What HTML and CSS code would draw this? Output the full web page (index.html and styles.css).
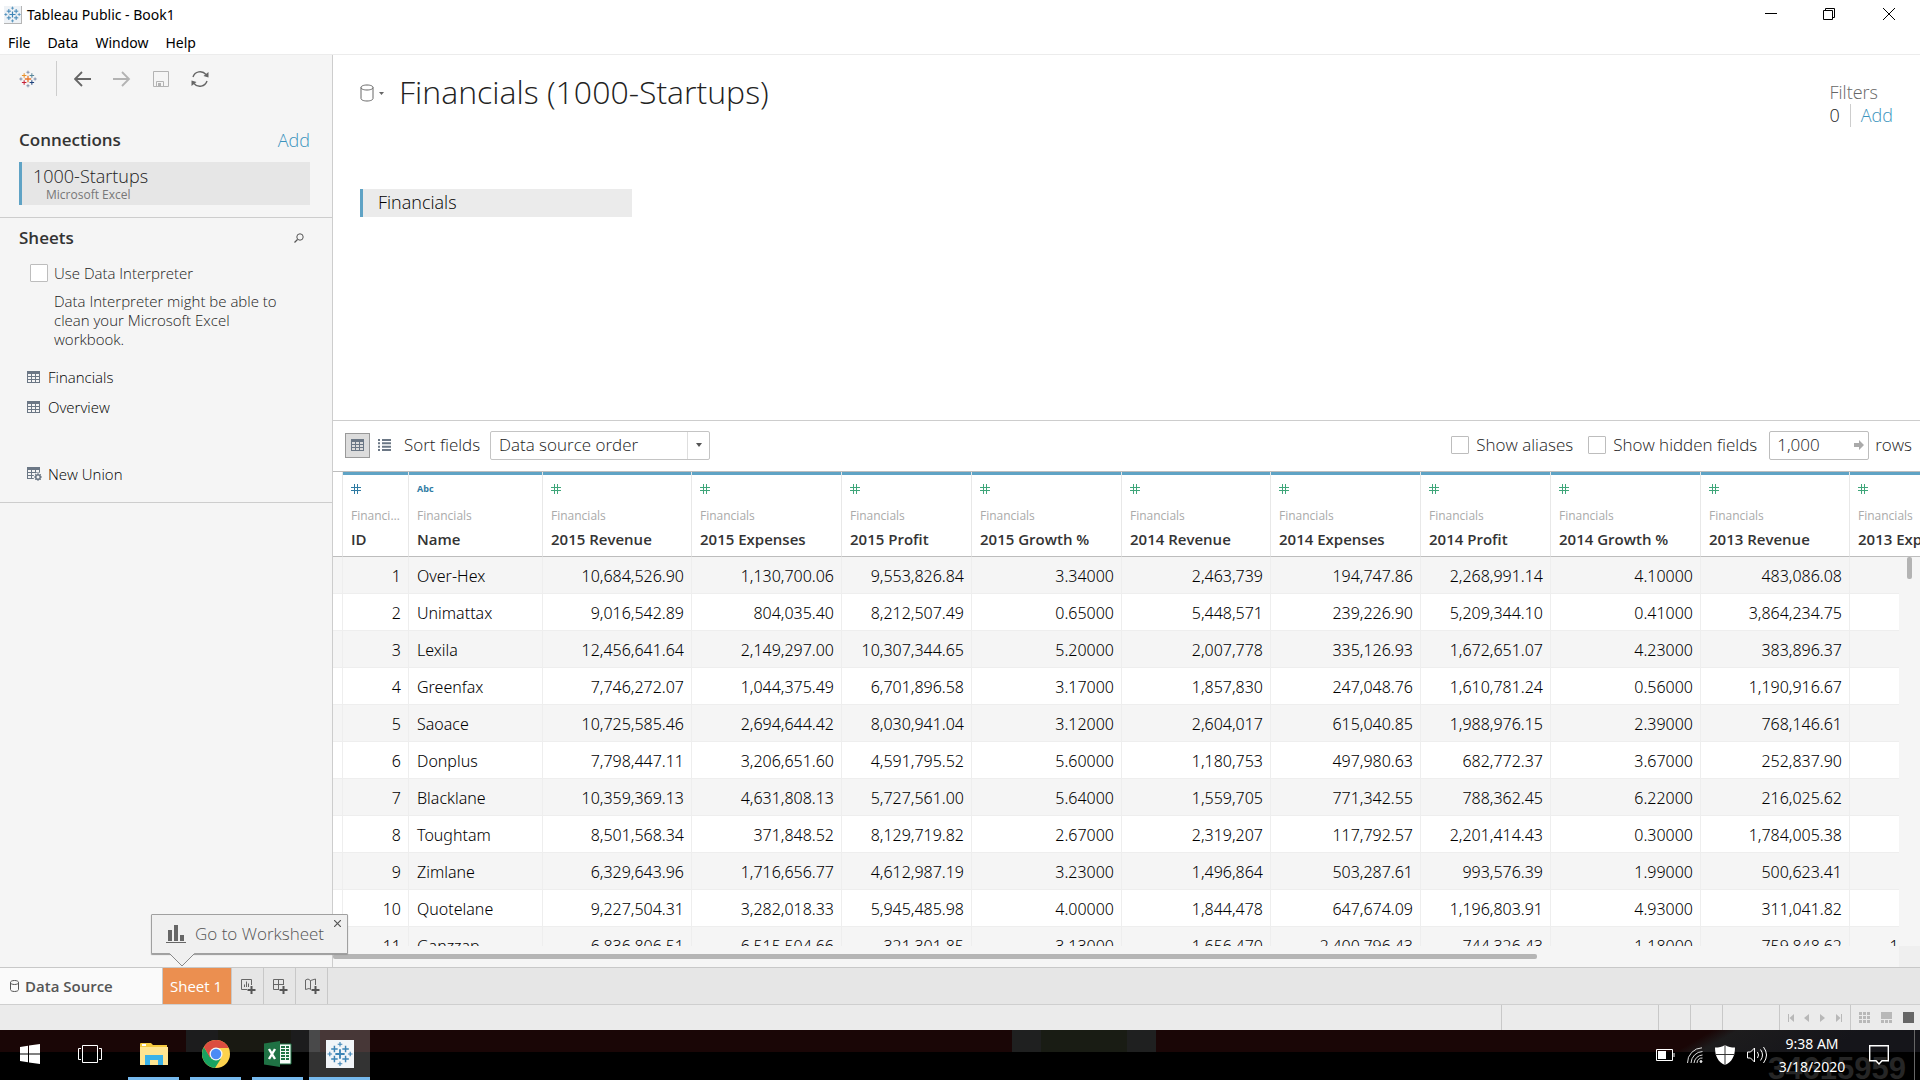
FILE: index.html
```html
<!DOCTYPE html>
<html lang="en">
<head>
<meta charset="utf-8">
<title>Tableau Public - Book1</title>
<link rel="stylesheet" href="styles.css">
</head>
<body>
<svg class="defs" aria-hidden="true">
  <symbol id="logo" viewBox="0 0 28 28">
    <path class="lg-c" d="M14 9v10M9 14h10" stroke-width="2"/>
    <path class="lg-nw" d="M8 5v7M4.500 8.500h7" stroke-width="1.600"/>
    <path class="lg-ne" d="M20 5v7M16.500 8.500h7" stroke-width="1.600"/>
    <path class="lg-sw" d="M8 16v7M4.500 19.500h7" stroke-width="1.600"/>
    <path class="lg-se" d="M20 16v7M16.500 19.500h7" stroke-width="1.600"/>
    <path class="lg-o" d="M14 1v5M11.500 3.500h5M14 22v5M11.500 24.500h5M3 11.500v5M.500 14h5M25 11.500v5M22.500 14h5" stroke-width="1.200"/>
  </symbol>
  <symbol id="grid" viewBox="0 0 13 12">
    <path fill="#6b7785" d="M0 0h13v12H0zM1 3v2h3V3zM5 3v2h3V3zM9 3v2h3V3zM1 6v2h3V6zM5 6v2h3V6zM9 6v2h3V6zM1 9v2h3V9zM5 9v2h3V9zM9 9v2h3V9z" fill-rule="evenodd"/>
  </symbol>
  <symbol id="num" viewBox="0 0 10 10"><path d="M3.500 0v10M6.500 0v10M0 3.500h10M0 6.500h10" stroke="currentColor" fill="none"/></symbol>
  <symbol id="db" viewBox="0 0 14 18"><path d="M1 3.500v11c0 1.400 2.500 2.500 6 2.500s6-1.100 6-2.500v-11M1 3.500C1 2 3.500 1 7 1s6 1 6 2.500S10.500 6 7 6 1 5 1 3.500z" fill="none" stroke="#666"/></symbol>
</svg>

<header class="titlebar">
  <svg class="applogo" viewBox="0 0 18 18"><path d="M0 0h18v18H0z" fill="#b5b5b5"/><path d="M0 0h17v17H0z" fill="#eef2f6"/><use href="#logo" width="17" height="17"/></svg>
  <h1 class="apptitle">Tableau Public - Book1</h1>
  <div class="winbtns">
    <button aria-label="Minimize"><svg width="12" height="12"><path d="M0 5.500h12"/></svg></button>
    <button aria-label="Restore"><svg width="12" height="12"><path d="M.500 2.500h9v9h-9zM2.500 2.500v-2h9v9h-2"/></svg></button>
    <button aria-label="Close"><svg width="12" height="12"><path d="M0 0l12 12M12 0L0 12"/></svg></button>
  </div>
</header>
<nav class="menubar"><a href="#file">File</a><a href="#data">Data</a><a href="#window">Window</a><a href="#help">Help</a></nav>

<div class="work">
  <aside class="side">
    <div class="tools">
      <button class="start" aria-label="Start page"><svg class="color" width="18" height="18"><use href="#logo"/></svg></button>
      <button aria-label="Undo"><svg width="18" height="18"><path d="M17 9H2M8 2L1 9l7 7" fill="none" stroke="#666" stroke-width="1.800"/></svg></button>
      <button aria-label="Redo"><svg width="18" height="18"><path d="M0 9h15M9 2l7 7-7 7" fill="none" stroke="#b3b3b3" stroke-width="1.800"/></svg></button>
      <button aria-label="Save"><svg width="18" height="18"><path d="M1.500 1.500h15v15h-15zM4.500 16.500v-5h7v5" fill="none" stroke="#b3b3b3"/><path d="M6 13h3v3H6z" fill="#b3b3b3"/></svg></button>
      <button aria-label="Refresh"><svg width="18" height="18"><path d="M2 7A7.500 7.500 0 0 1 15 4.500M16 11A7.500 7.500 0 0 1 3 13.500" fill="none" stroke="#666" stroke-width="1.400"/><path d="M17.500 2v5.500l-5-1.500zM.500 16v-5.500l5 1.500z" fill="#666"/></svg></button>
    </div>
    <section class="conns">
      <div class="head"><h2>Connections</h2><a href="#add">Add</a></div>
      <div class="conn"><div class="conn-name">1000-Startups</div><div class="conn-type">Microsoft Excel</div></div>
    </section>
    <section class="sheets">
      <div class="head"><h2>Sheets</h2><button aria-label="Search"><svg width="10" height="10"><circle cx="6" cy="4" r="3.200" fill="none" stroke="#555"/><path d="M3.500 6.500L.500 9.500" stroke="#555" stroke-width="1.300"/></svg></button></div>
      <label class="interp"><input type="checkbox">Use Data Interpreter</label>
      <p class="note">Data Interpreter might be able to clean your Microsoft Excel workbook.</p>
      <ul class="list">
        <li><svg width="13" height="12"><use href="#grid"/></svg>Financials</li>
        <li><svg width="13" height="12"><use href="#grid"/></svg>Overview</li>
        <li class="union"><svg width="15" height="14"><use href="#grid" width="13" height="12"/><circle cx="11" cy="10" r="4.500" fill="#f5f5f5"/><circle cx="11" cy="10" r="2.300" fill="none" stroke="#6b7785" stroke-width="1.600"/><path d="M11 6v1.500M11 12.500V14M7 10h1.500M13.500 10H15M8.200 7.200l1 1M12.800 11.800l1 1M13.800 7.200l-1 1M9.200 11.800l-1 1" stroke="#6b7785"/></svg>New Union</li>
      </ul>
    </section>
  </aside>

  <main class="main">
    <section class="canvas">
      <div class="canvas-top">
        <button class="dbbtn" aria-label="Data source menu"><svg width="14" height="18"><use href="#db"/></svg><svg width="5" height="3"><path d="M0 0h5L2.500 3z" fill="#666"/></svg></button>
        <h2 class="ds-title">Financials (1000-Startups)</h2>
        <div class="filters"><div class="f-label">Filters</div><div class="f-row"><span>0</span><a href="#filter">Add</a></div></div>
      </div>
      <div class="pill">Financials</div>
    </section>

    <div class="gridbar">
      <button class="view on" aria-label="Grid view"><svg width="13" height="12"><use href="#grid"/></svg></button>
      <button class="view" aria-label="List view"><svg width="13" height="12"><path d="M0 1h2M4 1h9M0 4.330h2M4 4.330h9M0 7.660h2M4 7.660h9M0 11h2M4 11h9" stroke="#6b7785" stroke-width="2"/></svg></button>
      <label for="sort">Sort fields</label>
      <span class="sel"><select id="sort"><option>Data source order</option></select><span class="arrow"><svg width="6" height="4"><path d="M0 0h6L3 4z" fill="#555"/></svg></span></span>
      <div class="right">
        <label><input type="checkbox">Show aliases</label>
        <label><input type="checkbox">Show hidden fields</label>
        <span class="rowsbox"><input id="rows" type="text" value="1,000"><svg width="10" height="10"><path d="M0 3h5V0l5 5-5 5V7H0z" fill="#aaa"/></svg></span>
        <label for="rows">rows</label>
      </div>
    </div>

    <div class="tablewrap">
      <table>
        <colgroup><col class="w9"><col class="w66"><col class="w134"><col class="w149"><col class="w150"><col class="w130"><col class="w150"><col class="w149"><col class="w150"><col class="w130"><col class="w150"><col class="w149"><col class="w150"></colgroup>
        <thead><tr id="hrow"><td></td></tr></thead>
        <tbody id="rowsbody"></tbody>
      </table>
      <div class="vtrack"><div class="vthumb"></div></div>
    </div>
    <div class="htrack"><div class="hthumb"></div></div>
  </main>
</div>

<div class="tabs">
  <button class="tab source"><svg width="9" height="12"><path d="M.500 2.500v7C.500 10.600 2 11.500 4.500 11.500s4-.900 4-2v-7M.500 2.500C.500 1.300 2 .500 4.500 .500s4 .800 4 2-1.500 2-4 2-4-.800-4-2z" fill="none" stroke="#555"/></svg>Data Source</button>
  <button class="tab sheet">Sheet 1</button>
  <button class="tab new" aria-label="New worksheet"><svg width="16" height="16"><path d="M7 11.500H1.500v-10h10V7M4.500 9V6.500M6.500 9V3.500M8.500 9V5.500" fill="none" stroke="#666"/><path d="M11.500 8v8M7.500 12h8" stroke="#555" stroke-width="2"/></svg></button>
  <button class="tab new" aria-label="New dashboard"><svg width="16" height="16"><path d="M7 11.500H1.500v-10h10V7M6.500 1.500v10M1.500 6.500h10" fill="none" stroke="#666"/><path d="M11.500 8v8M7.500 12h8" stroke="#555" stroke-width="2"/></svg></button>
  <button class="tab new" aria-label="New story"><svg width="16" height="16"><path d="M7 11.500L5 10.500l-3.500 1V2L4 1l2.500 1.500L11.500 1v6M6.500 2.500v8.500" fill="none" stroke="#666"/><path d="M11.500 8v8M7.500 12h8" stroke="#555" stroke-width="2"/></svg></button>
  <div class="tip">
    <svg width="20" height="18"><path d="M2 5h4v11H2zM8 0h4v16H8zM14 10h4v6h-4zM0 17h20v1H0z" fill="#666"/></svg>
    <span>Go to Worksheet</span>
    <button class="tipx" aria-label="Close tip"><svg width="7" height="7"><path d="M0 0l7 7M7 0L0 7" stroke="#555" stroke-width="1.200"/></svg></button>
    <svg class="tail" width="26" height="14"><path d="M0 0h26L13 13z" fill="#f0f0f0"/><path d="M.500.500L13 13 25.500.500" fill="none" stroke="#888"/></svg>
  </div>
</div>
<div class="status">
  <div class="c157"></div><div class="c32"></div><div class="c32"></div><div class="c57"></div>
  <div class="pager">
    <svg width="6" height="8"><path d="M0 0h1v8H0zM6 0v8L1.500 4z"/></svg>
    <svg width="6" height="8"><path d="M5 0v8L0 4z"/></svg>
    <svg width="6" height="8"><path d="M0 0v8l5-4z"/></svg>
    <svg width="6" height="8"><path d="M5 0h1v8H5zM0 0v8l4.500-4z"/></svg>
  </div>
  <div class="modes">
    <svg width="11" height="11"><path d="M0 0h3v3H0zM4 0h3v3H4zM8 0h3v3H8zM0 4h3v3H0zM4 4h3v3H4zM8 4h3v3H8zM0 8h3v3H0zM4 8h3v3H4zM8 8h3v3H8z"/></svg>
    <svg width="11" height="11"><path d="M0 0h11v7H0zM0 8h3v3H0zM4 8h3v3H4zM8 8h3v3H8z"/></svg>
    <svg class="dark" width="11" height="11"><path d="M0 0h11v11H0z"/></svg>
  </div>
</div>

<footer class="taskbar">
  <button class="task" aria-label="Start"><svg width="20" height="20" fill="#fff"><path d="M0 3l8-1.200V9.500H0zM9 1.600L20 0v9.500H9zM0 10.500h8v7.700L0 17zM9 10.500h11V20L9 18.400z"/></svg></button>
  <button class="task view-all" aria-label="Task view"><svg width="24" height="20" fill="none" stroke="#fff"><path d="M4.500 1.500h15v17h-15zM3 4.500H.500v11H3M21 4.500h2.500v11H21"/></svg></button>
  <button class="task run" aria-label="File Explorer"><svg width="28" height="24"><path d="M0 2q0-1 1-1h10l2 2h14v19H0z" fill="#f5c93f"/><path d="M0 5h28v18H0z" fill="#ffe591"/><path d="M2 2h4v2H2z" fill="#fff"/><path d="M5 23V13h18v10h-5v-5h-8v5z" fill="#3bb2e8"/></svg></button>
  <button class="task run" aria-label="Chrome"><svg width="28" height="28" viewBox="0 0 28 28"><circle cx="14" cy="14" r="14" fill="#fdd24d"/><path d="M1.900 7A14 14 0 0 0 13 28l6-9.500L8 17z" fill="#18a261"/><path d="M1.900 7L8 17.500 14 8h12.600A14 14 0 0 0 1.900 7z" fill="#db4d40"/><circle cx="14" cy="14" r="6.500" fill="#f5f5f5"/><circle cx="14" cy="14" r="5.200" fill="#4a8af5"/></svg></button>
  <button class="task run" aria-label="Excel"><svg width="28" height="26"><path d="M14 3h13v20H14z" fill="#f6faf7" stroke="#1f7244"/><path d="M17 6h4M17 9h4M17 12h4M17 15h4M17 18h4M22 6h3M22 9h3M22 12h3M22 15h3M22 18h3" stroke="#1f7244" stroke-width="2"/><path d="M0 2.500L16 0v26L0 23.500z" fill="#1f7244"/><path d="M5 8l6 10M11 8L5 18" stroke="#fff" stroke-width="2.400"/></svg></button>
  <button class="task run active" aria-label="Tableau"><svg width="28" height="28"><path d="M0 0h28v28H0z" fill="#f2f5f8"/><use href="#logo" x="1" y="1" width="26" height="26"/></svg></button>
  <div class="mark" aria-hidden="true">34615959</div>
  <div class="tray">
    <svg width="19" height="12"><path d="M.500.500h16v11H.500zM18 4v4" fill="none" stroke="#fff"/><path d="M2 2h8v8H2z" fill="#fff"/></svg>
    <svg width="16" height="16" fill="none" stroke="#ddd"><path d="M.500 16A15 15 0 0 1 15 .800M4 16A12 12 0 0 1 15.500 4.500M7 16A9 9 0 0 1 15.500 8M10 16a5 5 0 0 1 5.500-5"/><circle cx="14" cy="14.500" r="1" fill="#fff"/></svg>
    <svg width="20" height="20"><path d="M10 0c3 2 6 2.500 10 2.500C20 11 17 17 10 20 3 17 0 11 0 2.500 4 2.500 7 2 10 0z" fill="#fff"/><path d="M10 0v20M0 9.500h20" stroke="#333"/></svg>
    <svg width="21" height="20" fill="none" stroke="#fff"><path d="M.500 7v6h3l4 4V3l-4 4zM10.500 7q2 3 0 6M13.500 4.500q4 5.500 0 11M16.500 2q6 8 0 16"/></svg>
  </div>
  <div class="clock"><span>9:38 AM</span><span>3/18/2020</span></div>
  <svg class="notif" width="20" height="20"><path d="M.700.700h18.600v15H13L10 19l-3-3.300H.700z" fill="none" stroke="#fff" stroke-width="1.400"/></svg>
  <button class="peek" aria-label="Show desktop"></button>
</footer>
<script src="table.js"></script>
</body>
</html>
```
FILE: styles.css
```css
* { box-sizing: border-box; }
body {
  margin: 0; height: 100vh; display: flex; flex-direction: column; overflow: hidden;
  font-family: "Open Sans", "Noto Sans", sans-serif; font-size: 15px; line-height: 20px; color: #222; background: #fff; font-weight: 300;
}
h1, h2, p, ul { margin: 0; padding: 0; font-weight: 300; list-style: none; }
button { border: 0; padding: 0; background: none; font: inherit; color: inherit; display: flex; align-items: center; justify-content: center; }
a { text-decoration: none; color: #3a93bd; }
svg { display: block; flex: none; }
input[type="checkbox"] { appearance: none; width: 18px; height: 18px; margin: 0; flex: none; border: 1px solid #bdbdbd; border-radius: 1px; background: #fff; }
.defs { position: absolute; width: 0; height: 0; }
.lg-c { stroke: var(--c, #3d84b5); }
.lg-nw { stroke: var(--nw, #3d84b5); }
.lg-ne { stroke: var(--ne, #3d84b5); }
.lg-sw { stroke: var(--sw, #3d84b5); }
.lg-se { stroke: var(--se, #3d84b5); }
.lg-o { stroke: var(--o, #3d84b5); }
.color { --c: #e8762d; --nw: #e8912b; --ne: #59879b; --sw: #c72037; --se: #1f447e; --o: #6b7b9c; }

.titlebar { display: flex; align-items: center; height: 29px; padding-left: 4px; flex: none; }
.applogo { width: 18px; height: 18px; }
.apptitle, .menubar { font-family: "Noto Sans", sans-serif; font-size: 14px; font-weight: 400; color: #000; }
.apptitle { margin-left: 5px; flex: 1; }
.winbtns { display: flex; align-self: flex-start; }
.winbtns button { width: 58px; height: 28px; }
.winbtns svg { fill: none; stroke: #000; }
.winbtns button:last-child { width: 62px; }
.menubar { display: flex; gap: 17px; height: 26px; padding: 4px 8px 0; border-bottom: 1px solid #ececec; flex: none; }
.menubar a { color: #000; }

.work { flex: 1; min-height: 0; display: flex; }
.side { width: 333px; flex: none; background: #f5f5f5; border-right: 1px solid #cdcdcd; }
.tools { display: flex; gap: 21px; height: 72px; padding: 6px 0 31px 19px; }
.tools .start { border-right: 1px solid #cdcdcd; padding-right: 19px; margin-right: -4px; }
.conns { padding: 3px 22px 12px 19px; border-bottom: 1px solid #cdcdcd; }
.head { display: flex; justify-content: space-between; align-items: center; height: 20px; }
.head h2 { font-size: 17px; font-weight: 600; color: #333; }
.head a { font-size: 18px; }
.conn { margin-top: 12px; height: 43px; padding: 4px 0 0 11px; border-left: 3px solid #5fa3c5; background: #e6e6e6; }
.conn-name { font-size: 18px; line-height: 20px; }
.conn-type { margin-left: 13px; font-size: 12px; line-height: 18px; font-weight: 400; color: #777; }
.sheets { padding: 10px 28px 13px 19px; border-bottom: 1px solid #cdcdcd; }
.interp { display: flex; align-items: center; gap: 6px; margin: 15px 0 0 11px; height: 19px; }
.note { margin: 10px 8px 0 35px; line-height: 19px; }
.list { margin: 13px 0 0 8px; color: #000; }
.list li { display: flex; align-items: center; height: 30px; gap: 8px; }
.list .union { margin-top: 37px; gap: 6px; }

.main { flex: 1; min-width: 0; display: flex; flex-direction: column; }
.canvas { height: 366px; flex: none; padding: 18px 27px 0; border-bottom: 1px solid #cdcdcd; }
.canvas-top { display: flex; height: 116px; }
.dbbtn { height: 40px; gap: 5px; }
.ds-title { margin-left: 15px; font-size: 32px; line-height: 38px; flex: 1; }
.filters { padding-top: 8px; font-size: 18px; line-height: 23px; }
.f-label { color: #666; }
.f-row { display: flex; }
.f-row a { margin-left: 10px; padding-left: 10px; border-left: 1px solid #cdcdcd; }
.pill { width: 272px; height: 28px; padding-left: 15px; border-left: 3px solid #5fa3c5; background: #ebebeb; font-size: 18px; line-height: 27px; color: #000; }

.gridbar { display: flex; align-items: center; height: 51px; flex: none; padding: 0 8px 2px 12px; border-bottom: 1px solid #bdbdbd; font-size: 17px; }
.view { width: 25px; height: 25px; }
.view.on { border: 1px solid #999; background: #dcdcdc; margin-right: 2px; }
.gridbar > label { width: 86px; margin: 0 0 0 7px; white-space: nowrap; }
.sel { position: relative; width: 220px; height: 29px; }
.sel select { width: 100%; height: 100%; appearance: none; border: 1px solid #c4c4c4; border-radius: 2px; background: #fff; padding: 0 8px; font: inherit; color: inherit; }
.sel .arrow { position: absolute; right: 1px; top: 1px; width: 22px; height: 27px; border-left: 1px solid #dedede; display: flex; align-items: center; justify-content: center; pointer-events: none; }
.right { margin-left: auto; display: flex; align-items: center; }
.right label { display: flex; align-items: center; gap: 7px; margin-right: 12px; }
.right label:first-child { margin-right: 15px; }
.right > label:last-child { margin: 0; }
.rowsbox { display: flex; align-items: center; width: 100px; height: 29px; margin-right: 6px; padding: 0 4px 0 7px; border: 1px solid #bdbdbd; border-radius: 2px; }
.rowsbox input { flex: 1; min-width: 0; border: 0; padding: 0; background: none; outline: 0; font: inherit; color: inherit; }

.tablewrap { flex: 1; min-height: 0; overflow: hidden; position: relative; }
table { table-layout: fixed; border-collapse: separate; border-spacing: 0; width: 1666px; }
.w9 { width: 10px; } .w66 { width: 66px; } .w134 { width: 134px; } .w149 { width: 149px; } .w150 { width: 150px; } .w130 { width: 130px; }
thead th, thead td { height: 85px; padding: 0; border-bottom: 1px solid #bdbdbd; border-right: 1px solid #e8e8e8; text-align: left; font-weight: 400; vertical-align: top; }
.h { border-top: 3px solid #5fa3c5; padding: 8px 7px 0 8px; }
.h .type { height: 12px; display: flex; align-items: center; font-size: 9px; font-weight: 700; color: #2f7ba3; }
.h .type.m { color: #3fa67a; }
.h .src { margin-top: 13px; font-size: 12px; line-height: 16px; color: #aaa; overflow: hidden; text-overflow: ellipsis; }
.h .fld { margin-top: 5px; font-size: 15px; line-height: 20px; font-weight: 600; color: #333; white-space: nowrap; overflow: hidden; }
tbody td { height: 37px; padding: 2px 7px 0 8px; border-bottom: 1px solid #eee; border-right: 1px solid #eee; font-family: "Noto Sans", sans-serif; font-size: 16px; line-height: 20px; text-align: right; color: #000; white-space: nowrap; }
tbody td:nth-child(3) { text-align: left; }
tbody tr:nth-child(odd) { background: #f5f5f5; }
.vtrack { position: absolute; right: 0; top: 85px; bottom: 0; width: 21px; background: #f5f5f5; }
.vthumb { width: 5px; height: 22px; margin-left: 8px; border-radius: 2px; background: #b3b3b3; }
.htrack { height: 21px; flex: none; padding-top: 8px; background: linear-gradient(to left, #efefef 21px, #f5f5f5 21px); }
.hthumb { width: calc(76% - 2px); height: 5px; border-radius: 2px; background: #b5b5b5; }

.tabs { position: relative; display: flex; height: 38px; flex: none; background: #e6e6e6; border-top: 1px solid #c8c8c8; border-bottom: 1px solid #cfcfcf; }
.tab { border-right: 1px solid #c8c8c8; }
.tab.source { width: 163px; background: #fafafa; justify-content: flex-start; padding-left: 10px; gap: 6px; font-weight: 600; color: #555; font-size: 15px; }
.tab.sheet { width: 69px; padding-right: 2px; background: #eb8f50; color: #fff; font-size: 15px; font-weight: 400; }
.tab.new { width: 32px; }
.tip { position: absolute; left: 151px; bottom: 50px; width: 197px; height: 40px; display: flex; align-items: center; gap: 9px; padding: 0 0 0 14px; border: 1px solid #a0a0a0; box-shadow: 0 1px 1px #999; background: #f0f0f0; font-size: 17px; color: #555; border-radius: 1px; }
.tipx { position: absolute; right: 6px; top: 5px; }
.tail { position: absolute; left: 17px; top: 38px; }
.status { display: flex; justify-content: flex-end; height: 25px; flex: none; background: #ebebeb; }
.status > div { border-left: 1px solid #c8c8c8; }
.status svg { fill: #b8b8b8; }
.c157 { width: 157px; } .c32 { width: 32px; } .c57 { width: 57px; }
.pager { width: 71px; display: flex; align-items: center; justify-content: space-between; padding: 0 8px; }
.modes { width: 70px; display: flex; align-items: center; justify-content: space-between; padding: 0 6px 0 8px; }
.status .dark { fill: #666; }

.taskbar {
  position: relative; display: flex; height: 50px; flex: none;
  background:
    linear-gradient(to right, #1c1c1d 24%, #191912 24% 78%, #1c1c1d 78%) 186px 0 / 134px 22px no-repeat,
    linear-gradient(to right, #1f2020 20%, #191c14 20% 80%, #1f2020 80%) 57% 0 / 144px 22px no-repeat,
    linear-gradient(150deg, transparent 22%, #1d1c1d 30%, #15151a 70%) 100% 0 / 276px 22px no-repeat,
    linear-gradient(to bottom, #1a0606 22px, #000 22px);
}
.task { width: 51px; height: 50px; margin-right: 11px; border-bottom: 3px solid transparent; }
.task:first-child { margin-left: 4px; margin-right: 9px; }
.task.view-all { margin-right: 13px; }
.task.run { border-bottom-color: #76b9ed; }
.task.active { width: 61px; margin-left: -5px; background-color: rgba(255,255,255,.2); }
.mark { position: absolute; right: 14px; bottom: -5px; font: 700 31px/32px "Liberation Sans", sans-serif; color: #262626; }
.tray { position: relative; margin-left: auto; display: flex; align-items: center; gap: 12px; }
.clock { position: relative; width: 88px; display: flex; flex-direction: column; justify-content: center; align-items: center; font-family: "Noto Sans", sans-serif; font-size: 14px; font-weight: 400; line-height: 23px; color: #fff; }
.notif { position: relative; align-self: center; margin: 0 25px 0 13px; }
.peek { width: 6px; border-left: 1px solid #666; }
```
FILE: table.js
```js
const fields = ["ID", "Name", "2015 Revenue", "2015 Expenses", "2015 Profit", "2015 Growth %", "2014 Revenue", "2014 Expenses", "2014 Profit", "2014 Growth %", "2013 Revenue", "2013 Expenses"];
const rows = [
  "1|Over-Hex|10,684,526.90|1,130,700.06|9,553,826.84|3.34000|2,463,739|194,747.86|2,268,991.14|4.10000|483,086.08|",
  "2|Unimattax|9,016,542.89|804,035.40|8,212,507.49|0.65000|5,448,571|239,226.90|5,209,344.10|0.41000|3,864,234.75|",
  "3|Lexila|12,456,641.64|2,149,297.00|10,307,344.65|5.20000|2,007,778|335,126.93|1,672,651.07|4.23000|383,896.37|",
  "4|Greenfax|7,746,272.07|1,044,375.49|6,701,896.58|3.17000|1,857,830|247,048.76|1,610,781.24|0.56000|1,190,916.67|",
  "5|Saoace|10,725,585.46|2,694,644.42|8,030,941.04|3.12000|2,604,017|615,040.85|1,988,976.15|2.39000|768,146.61|",
  "6|Donplus|7,798,447.11|3,206,651.60|4,591,795.52|5.60000|1,180,753|497,980.63|682,772.37|3.67000|252,837.90|",
  "7|Blacklane|10,359,369.13|4,631,808.13|5,727,561.00|5.64000|1,559,705|771,342.55|788,362.45|6.22000|216,025.62|",
  "8|Toughtam|8,501,568.34|371,848.52|8,129,719.82|2.67000|2,319,207|117,792.57|2,201,414.43|0.30000|1,784,005.38|",
  "9|Zimlane|6,329,643.96|1,716,656.77|4,612,987.19|3.23000|1,496,864|503,287.61|993,576.39|1.99000|500,623.41|",
  "10|Quotelane|9,227,504.31|3,282,018.33|5,945,485.98|4.00000|1,844,478|647,674.09|1,196,803.91|4.93000|311,041.82|",
  "11|Ganzzap|6,836,806.51|6,515,504.66|321,301.85|3.13000|1,656,470|2,400,796.43|744,326.43|1.18000|759,848.62|10,379,089.40"
];
document.getElementById("hrow").innerHTML += fields.map((f, i) => {
  const type = i === 1 ? "Abc" : '<svg width="10" height="10"><use href="#num"/></svg>';
  return `<th scope="col"><div class="h"><div class="type${i > 1 ? " m" : ""}">${type}</div><div class="src">Financials</div><div class="fld">${f}</div></div></th>`;
}).join("");
document.getElementById("rowsbody").innerHTML = rows.map(r => "<tr><td></td>" + r.split("|").map(c => `<td>${c}</td>`).join("") + "</tr>").join("");
```
